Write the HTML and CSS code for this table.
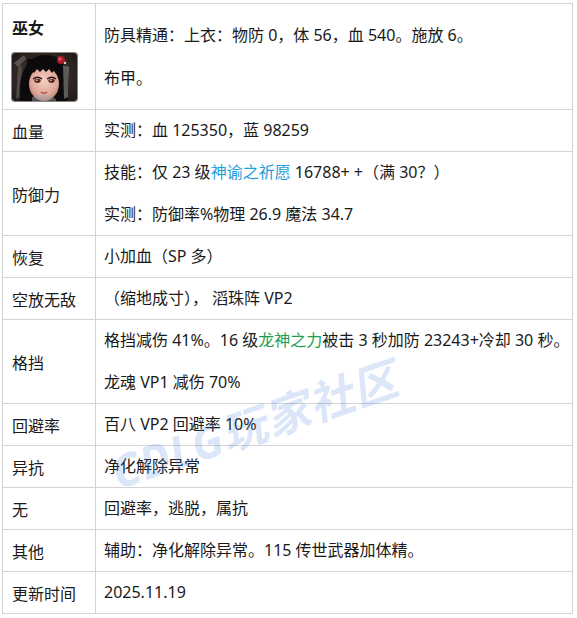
FILE: index.html
```html
<!DOCTYPE html>
<html lang="zh-CN">
<head>
<meta charset="utf-8">
<title>巫女</title>
<link rel="stylesheet" href="styles.css">
</head>
<body>
<div class="page">
<table class="info">
  <colgroup>
    <col class="col-label">
    <col class="col-value">
  </colgroup>
  <tr class="row-head">
    <td class="label">
      <div class="name">巫女</div>
      <div class="avatar">
        <svg width="65" height="48" viewBox="0 0 65 48" xmlns="http://www.w3.org/2000/svg">
          <defs>
            <radialGradient id="bg" cx="0.5" cy="0.5" r="0.75">
              <stop offset="0" stop-color="#4e403a"/>
              <stop offset="1" stop-color="#1a1513"/>
            </radialGradient>
            <radialGradient id="face" cx="0.5" cy="0.4" r="0.65">
              <stop offset="0" stop-color="#f5cfc2"/>
              <stop offset="0.7" stop-color="#dca595"/>
              <stop offset="1" stop-color="#9a6458"/>
            </radialGradient>
          </defs>
          <rect width="65" height="48" fill="url(#bg)"/>
          <path d="M2 10 L12 2 L14 6 L6 14 Z" fill="#7a7570" opacity="0.6"/>
          <path d="M6 14 L10 12 L8 44 L4 46 Z" fill="#5e5954" opacity="0.7"/>
          <path d="M8 48 C6 26 12 4 31 2 C48 1 57 12 57 26 C57 36 56 44 55 48 Z" fill="#0c0a0b"/>
          <ellipse cx="32" cy="31" rx="15" ry="17" fill="url(#face)"/>
          <rect x="15" y="6" width="34" height="10" fill="#0c0a0b"/>
          <path d="M15 16 L17 21 L19 16 L22 20 L25 16 L28 19 L31 16 L34 19 L37 16 L40 20 L43 16 L46 21 L49 16 Z" fill="#0c0a0b"/>
          <path d="M17 18 C14 30 15 40 19 48 L13 48 C10 38 11 26 17 18 Z" fill="#0c0a0b"/>
          <path d="M47 18 C50 30 49 40 45 48 L51 48 C54 38 53 26 47 18 Z" fill="#0c0a0b"/>
          <path d="M21 26 Q25.5 22.5 30 26" stroke="#2a1614" stroke-width="1.3" fill="none"/>
          <path d="M35 26 Q39.5 22.5 44 26" stroke="#2a1614" stroke-width="1.3" fill="none"/>
          <ellipse cx="25.5" cy="27.8" rx="3.2" ry="2.1" fill="#5a2c26"/>
          <ellipse cx="39.5" cy="27.8" rx="3.2" ry="2.1" fill="#5a2c26"/>
          <circle cx="24.8" cy="27.2" r="0.8" fill="#f0d8d0"/>
          <circle cx="38.8" cy="27.2" r="0.8" fill="#f0d8d0"/>
          <path d="M29 39 Q32 41.5 35 39" stroke="#b0504c" stroke-width="1.6" fill="none"/>
          <circle cx="49" cy="7" r="4" fill="#a81c26"/>
          <circle cx="48" cy="6" r="1.8" fill="#e85058"/>
          <circle cx="53" cy="10" r="1.2" fill="#d9d4cc"/>
          <path d="M51 12 L57 14 L56 44 L52 46 Z" fill="#9a9ca0" opacity="0.55"/>
          <path d="M20 44 Q32 38 44 46 L44 48 L20 48 Z" fill="#a5b0b4" opacity="0.45"/>
        </svg>
      </div>
    </td>
    <td class="value">
      <p>防具精通：上衣：物防 0，体 56，血 540。施放 6。</p>
      <p>布甲。</p>
    </td>
  </tr>
  <tr>
    <td class="label">血量</td>
    <td class="value"><p>实测：血 125350，蓝 98259</p></td>
  </tr>
  <tr class="two">
    <td class="label">防御力</td>
    <td class="value">
      <p>技能：仅 23 级<span class="blue">神谕之祈愿</span> 16788+ +（满 30？）</p>
      <p>实测：防御率%物理 26.9 魔法 34.7</p>
    </td>
  </tr>
  <tr>
    <td class="label">恢复</td>
    <td class="value"><p>小加血（SP 多）</p></td>
  </tr>
  <tr>
    <td class="label">空放无敌</td>
    <td class="value"><p>（缩地成寸），<span class="gap"></span>滔珠阵 VP2</p></td>
  </tr>
  <tr class="two">
    <td class="label">格挡</td>
    <td class="value">
      <p>格挡减伤 41%。16 级<span class="green">龙神之力</span>被击 3 秒加防 23243+冷却 30 秒。</p>
      <p>龙魂 VP1 减伤 70%</p>
    </td>
  </tr>
  <tr>
    <td class="label">回避率</td>
    <td class="value"><p>百八 VP2 回避率 10%</p></td>
  </tr>
  <tr>
    <td class="label">异抗</td>
    <td class="value"><p>净化解除异常</p></td>
  </tr>
  <tr>
    <td class="label">无</td>
    <td class="value"><p>回避率，逃脱，属抗</p></td>
  </tr>
  <tr>
    <td class="label">其他</td>
    <td class="value"><p>辅助：净化解除异常。115 传世武器加体精。</p></td>
  </tr>
  <tr>
    <td class="label">更新时间</td>
    <td class="value"><p>2025.11.19</p></td>
  </tr>
</table>
<div class="watermark">CDLG玩家社区</div>
</div>
</body>
</html>
```
FILE: styles.css
```css
html, body {
  margin: 0;
  padding: 0;
  background: #ffffff;
}
.page {
  position: relative;
  padding: 3px 0 0 2px;
  font-family: "Noto Sans", "Noto Sans CJK SC", sans-serif;
  font-size: 16px;
  color: #1a1a1a;
  z-index: 0;
}
.info {
  border-collapse: collapse;
  table-layout: fixed;
  width: 571px;
  border: 1px solid #d4d4d4;
  position: relative;
  z-index: 1;
}
.col-label {
  width: 93px;
}
.info td {
  border: 1px solid #d4d4d4;
  vertical-align: middle;
  padding: 0 8px;
}
.info td.label {
  padding-left: 9px;
  white-space: nowrap;
}
.row-head td.label {
  padding-top: 8px;
  padding-bottom: 8px;
  vertical-align: top;
}
.name {
  font-weight: bold;
  line-height: 32px;
}
.avatar {
  margin-top: 9px;
  width: 65px;
  height: 48px;
  border-radius: 3px;
  overflow: hidden;
  box-shadow: 0 0 0 1px #8a8480;
}
.avatar svg {
  display: block;
}
.value p {
  margin: 0;
  line-height: 41px;
  white-space: nowrap;
}
.two .value p {
  line-height: 41.5px;
}
.row-head .value p {
  line-height: 43px;
}
.blue {
  color: #1d9fd9;
}
.green {
  color: #1f9e4f;
}
.gap {
  display: inline-block;
  width: 4px;
}
.watermark {
  position: absolute;
  left: 104px;
  top: 390px;
  font-size: 45px;
  font-weight: bold;
  font-style: italic;
  color: rgba(70, 125, 225, 0.2);
  transform: rotate(-19deg);
  white-space: nowrap;
  z-index: 2;
  pointer-events: none;
  letter-spacing: 1px;
}
```
